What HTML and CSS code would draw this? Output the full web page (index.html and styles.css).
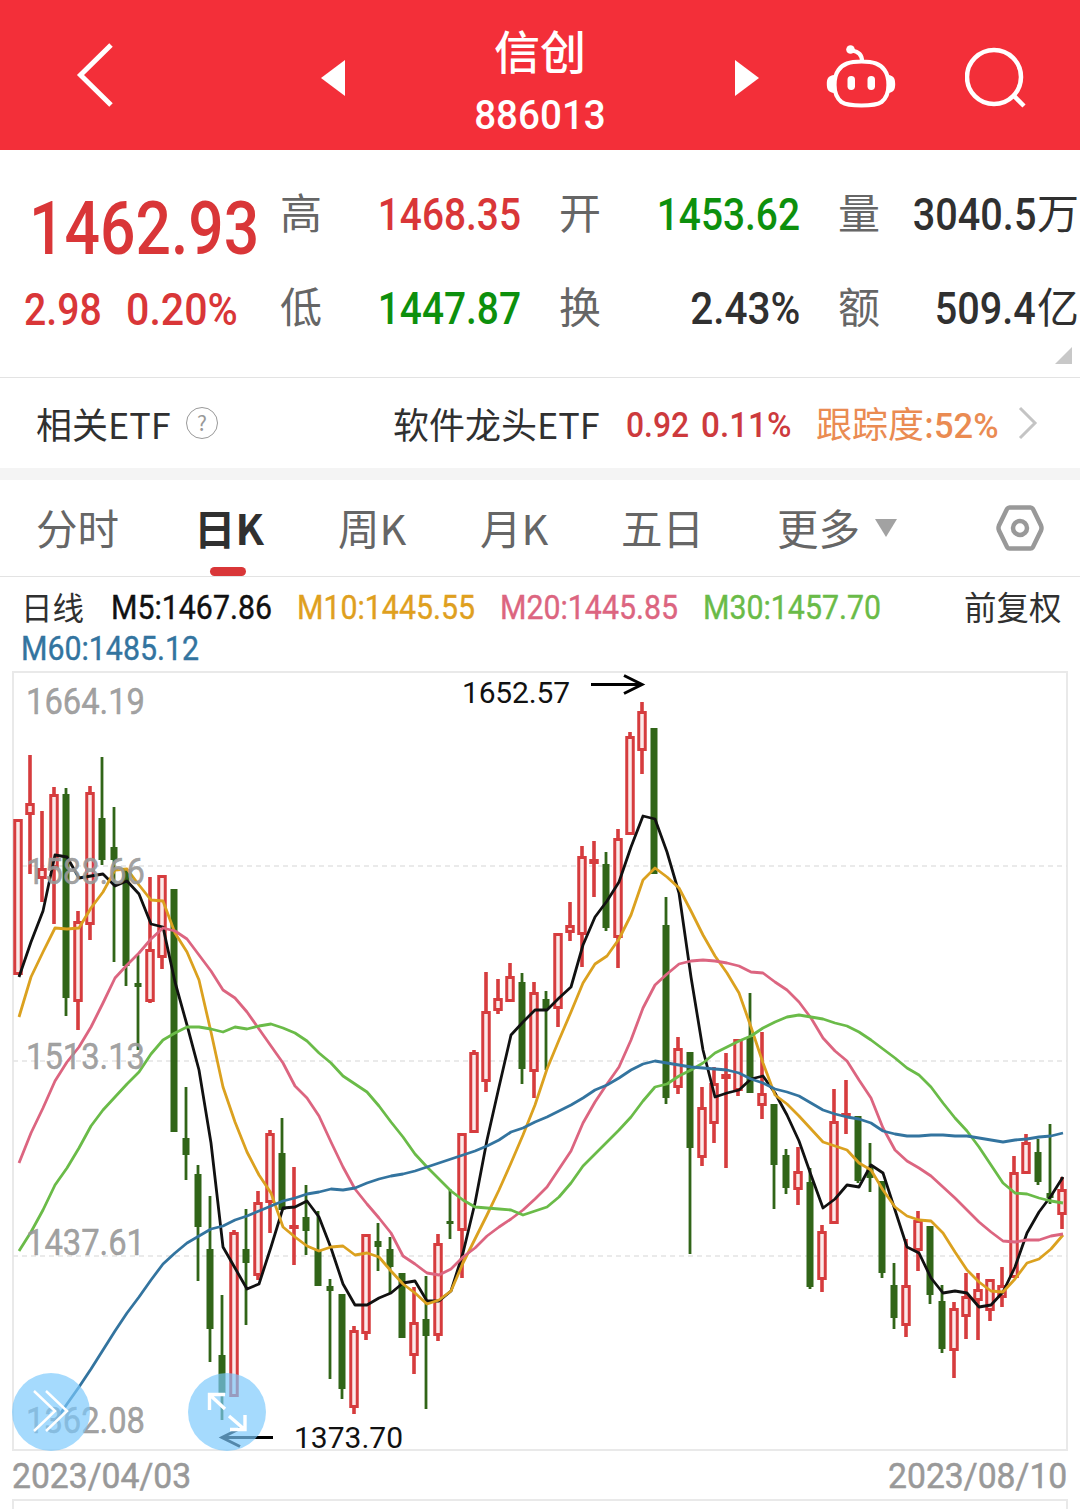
FILE: index.html
```html
<!DOCTYPE html>
<html lang="zh-CN">
<head>
<meta charset="utf-8">
<title>信创 886013</title>
<link rel="stylesheet" href="styles.css">
</head>
<body>
<header class="topbar">
  <svg class="back" viewBox="0 0 40 66"><path d="M36 3 5.500 33 36 63"/></svg>
  <svg class="tri prev" viewBox="0 0 24 36"><path d="M24 0V36L0 18Z"/></svg>
  <div class="title"><h1>信创</h1><span class="num code">886013</span></div>
  <svg class="tri next" viewBox="0 0 24 36"><path d="M0 0V36L24 18Z"/></svg>
  <svg class="robot" viewBox="0 0 70 66">
    <path class="line" d="M35.500 17.500C48 17.500 54 20 58.500 26C61.500 30 62.500 35 62.500 41C62.500 48 60.500 54 55.500 58C50.500 61.300 44 61.500 35.500 61.500C27 61.500 20.500 61.300 15.500 58C10.500 54 8.500 48 8.500 41C8.500 35 9.500 30 12.500 26C17 20 23 17.500 35.500 17.500ZM36 17C36 10 32 7.500 26 6.500"/>
    <circle cx="24.500" cy="5.500" r="4.300"/>
    <rect x="21.500" y="32" width="7.500" height="14" rx="3.700"/><rect x="41.500" y="32" width="7.500" height="14" rx="3.700"/>
    <path d="M8.500 31C2 31.500 .8 35 .8 40S2 48.500 8.500 49ZM62 31C68 31.500 69.200 35 69.200 40S68 48.500 62 49Z"/>
  </svg>
  <svg class="search" viewBox="0 0 64 64"><circle cx="29" cy="30" r="27"/><path d="M48 48 59 59"/></svg>
</header>

<section class="quote">
  <div class="main">
    <div class="price"><span class="num">1462.93</span></div>
    <div class="change"><span class="num">2.98</span><span class="num pct">0.20%</span></div>
  </div>
  <dl class="stats">
    <div><dt>高</dt><dd class="up"><span class="num">1468.35</span></dd></div>
    <div><dt>开</dt><dd class="down"><span class="num">1453.62</span></dd></div>
    <div><dt>量</dt><dd><span class="num wide">3040.5</span><span class="unit">万</span></dd></div>
    <div><dt>低</dt><dd class="down"><span class="num">1447.87</span></dd></div>
    <div><dt>换</dt><dd><span class="num pct">2.43%</span></dd></div>
    <div><dt>额</dt><dd><span class="num wide">509.4</span><span class="unit">亿</span></dd></div>
  </dl>
  <i class="corner"></i>
</section>

<section class="etf">
  <span class="etf-label">相关ETF</span>
  <span class="help">?</span>
  <span class="etf-name">软件龙头ETF</span>
  <span class="num etf-price">0.92</span>
  <span class="num etf-pct">0.11%</span>
  <span class="track">跟踪度:<span class="num">52%</span></span>
  <svg class="chev" viewBox="0 0 20 34"><path d="M2 2 17 17 2 32"/></svg>
</section>

<nav class="tabs">
  <a>分时</a><a class="active">日K</a><a>周K</a><a>月K</a><a>五日</a><a>更多</a>
  <i class="caret"></i>
  <svg class="gear" viewBox="0 0 48 46"><path d="M13.500 2.500H34.500Q36 2.500 37 4L45 20.500Q46 23 45 25.500L37 42Q36 43.500 34.500 43.500H13.500Q12 43.500 11 42L3 25.500Q2 23 3 20.500L11 4Q12 2.500 13.500 2.500Z"/><circle cx="24" cy="23" r="7"/></svg>
</nav>

<section class="legend">
  <span class="period">日线</span>
  <span class="num m5">M5:1467.86</span>
  <span class="num m10">M10:1445.55</span>
  <span class="num m20">M20:1445.85</span>
  <span class="num m30">M30:1457.70</span>
  <span class="adjust">前复权</span>
  <span class="num m60">M60:1485.12</span>
</section>

<section class="chart">
  <svg id="kline" viewBox="0 665 1080 790"></svg>
  <button class="float expand"><svg viewBox="0 0 78 78"><path d="M22 18 43 38 22 58M34 18 55 38 34 58"/></svg></button>
  <button class="float full"><svg viewBox="0 0 78 78"><path class="bold" d="M37 36 22 22M21.500 37V21.500H37M41 43 56 56M42 56.500H57V42"/></svg></button>
</section>
<div class="dates"><span class="num">2023/04/03</span><span class="num">2023/08/10</span></div>
<section class="volume"></section>
<script src="chart.js"></script>
</body>
</html>
```
FILE: styles.css
```css
* { box-sizing: border-box; }
body {
  margin: 0;
  width: 1080px;
  height: 1509px;
  overflow: hidden;
  background: #fff;
  color: #303030;
  font-family: "Noto Sans CJK SC", sans-serif;
}
svg { display: block; fill: none; flex: none; }
.num {
  display: inline-block;
  font-family: Roboto, sans-serif;
  font-weight: 500;
  white-space: nowrap;
  transform-origin: 0 50%;
}

.topbar { display: flex; height: 150px; background: #f32f39; color: #fff; }
.back { width: 40px; height: 66px; margin: 42px 0 0 75px; stroke: #fff; stroke-width: 5; }
.tri { width: 24px; height: 36px; margin-top: 60px; fill: #fff; }
.prev { margin-left: 206px; }
.title { width: 390px; text-align: center; padding-top: 19px; }
.title h1 { margin: 0; font-size: 46px; font-weight: 500; line-height: 60px; }
.code { display: block; font-size: 41.500px; line-height: 50px; margin-top: 11px; transform: scaleX(.93); transform-origin: 50% 50%; }
.robot { width: 70px; height: 66px; margin: 44px 0 0 67px; fill: #fff; }
.robot .line { fill: none; stroke: #fff; stroke-width: 4.200; }
.search { width: 64px; height: 64px; margin: 47px 0 0 69px; stroke: #fff; stroke-width: 4.500; }

.quote { position: relative; display: flex; height: 228px; border-bottom: 1px solid #e3e3e3; }
.main { width: 280px; color: #d93638; }
.price { height: 120px; padding: 28px 0 0 29px; font-size: 74.500px; line-height: 88px; }
.price .num { line-height: 88px; transform: scaleX(.838); }
.change { display: flex; padding-left: 24px; font-size: 44px; line-height: 80px; }
.change .num { width: 102px; transform: scaleX(.89); }
.change .pct { transform: scaleX(.935); }
.stats { display: grid; grid-template-columns: repeat(3, 241px); column-gap: 38px; grid-auto-rows: 94px; margin: 15px 0 0; font-size: 42px; line-height: 92px; }
.stats div { display: flex; justify-content: space-between; height: 94px; }
.stats dt { color: #666; }
.stats dd { margin: 0; white-space: nowrap; display: flex; justify-content: flex-end; }
.stats .num { font-size: 45px; line-height: 99px; transform: scaleX(.863); transform-origin: 100% 50%; }
.stats .pct { transform: scaleX(.9); }
.stats .wide { margin-right: 1px; transform: scaleX(.88); }
.up { color: #d93638; }
.down { color: #0d900d; }
.corner { position: absolute; right: 8px; bottom: 13px; width: 17px; height: 17px; background: #c8c8c8; clip-path: polygon(100% 0, 100% 100%, 0 100%); }

.etf { display: flex; align-items: center; height: 102px; border-bottom: 12px solid #f4f4f4; padding-left: 36px; font-size: 36px; line-height: 90px; white-space: nowrap; }
.etf > * { flex: none; }
.etf-label { width: 150px; }
.help { width: 32px; height: 32px; border: 1.500px solid #999; border-radius: 50%; font-size: 21px; line-height: 28px; text-align: center; color: #999; }
.etf-name { width: 233px; margin-left: 175px; }
.etf .num { font-size: 35px; }
.etf-price, .etf-pct { padding-top: 5px; color: #cd3a3d; }
.etf-price { width: 75px; transform: scaleX(.91); }
.etf-pct { width: 115px; transform: scaleX(.95); }
.track { width: 202px; padding-top: 2px; color: #ea8b52; }
.track .num { transform: scaleX(.985); }
.chev { width: 20px; height: 34px; stroke: #c4c4c4; stroke-width: 3; }

.tabs { display: flex; align-items: center; height: 97px; border-bottom: 1px solid #e3e3e3; padding-left: 36px; font-size: 41.500px; line-height: 94px; color: #666; }
.tabs a { position: relative; width: 142px; height: 96px; white-space: nowrap; }
.tabs a:first-child { width: 158px; }
.tabs a:nth-child(2) { width: 144px; }
.tabs a:nth-child(4) { width: 141px; }
.tabs a:nth-child(5) { width: 156px; }
.tabs a:nth-child(6) { width: 98px; }
.tabs .active { font-weight: 700; color: #303030; }
.active::after { content: ""; position: absolute; left: 16px; bottom: 0; width: 36px; height: 9px; border-radius: 5px; background: #d93638; }
.caret { width: 22px; height: 18px; background: #a2a2a2; clip-path: polygon(0 0, 100% 0, 50% 100%); }
.gear { width: 48px; height: 46px; margin-left: 99px; stroke: #999; stroke-width: 4.500; }

.legend { display: grid; grid-template-columns: 90px 186px 203px 203px 261px 100px; grid-template-rows: 41px 41px; height: 88px; padding: 10px 0 0 21px; font-size: 32.500px; line-height: 38px; white-space: nowrap; }
.legend .num { font-size: 33px; line-height: 41px; font-weight: 400; -webkit-text-stroke: .4px currentColor; transform: scaleX(.918); }
.period { font-size: 31.500px; }
.m5 { color: #111; }
.m10 { color: #dfa01e; }
.m20 { color: #dc6580; }
.m30 { color: #6abb48; }
.m60 { color: #33749f; }

.chart { position: relative; height: 790px; }
#kline { width: 1080px; height: 790px; }
.frame { stroke: #e9e9e9; stroke-width: 2; }
.grid { stroke: #e4e4e4; stroke-width: 1.500; stroke-dasharray: 5 4; }
.rise { stroke: #d63c3e; fill: #fbe9e9; stroke-width: 3; }
.rise-wick { stroke: #d63c3e; stroke-width: 3.600; }
.fall { fill: #316518; }
.fall-wick { stroke: #316518; stroke-width: 2.800; }
.ma { stroke-width: 2.800; stroke-linejoin: round; }
.ma.m5 { stroke: #111; }
.ma.m10 { stroke: #dba11f; }
.ma.m20 { stroke: #dc6580; }
.ma.m30 { stroke: #6abb48; }
.ma.m60 { stroke: #33749f; }
.axis { fill: #999; fill-opacity: .92; stroke: #999; stroke-opacity: .92; stroke-width: .5; font: 400 36px Roboto, sans-serif; }
.mark { fill: #111; font: 400 30px Roboto, sans-serif; }
.arrow { stroke: #000; stroke-width: 3; }
.float { position: absolute; top: 708px; width: 78px; height: 78px; padding: 0; border: 0; border-radius: 50%; background: rgba(122, 200, 252, .68); }
.float svg { stroke: #fff; stroke-width: 2.500; }
.float .bold { stroke-width: 3.400; }
.expand { left: 12px; }
.full { left: 188px; }

.dates { display: flex; justify-content: space-between; height: 44px; padding: 0 13px 0 12px; font-size: 35px; line-height: 43px; color: #999; }
.dates .num { font-weight: 400; -webkit-text-stroke: .5px currentColor; transform: scaleX(.962); }
.dates .num:last-child { transform-origin: 100% 50%; }
.volume { height: 30px; margin: 0 12px; border: 2px solid #e9e9e9; }
```
FILE: chart.js
```js
// Each candle: direction, high, body top, body bottom, low (chart y units).
const candles = `r819,819,975,975 r755,803,815,874 r811,868,879,902 r787,794,868,924 g788,794,998,1016 r911,921,1002,1030 r786,792,925,940 g757,818,860,865
g807,847,860,962 g869,869,966,986 g955,983,987,1050 r877,949,1002,1003 r875,875,958,969 g889,889,1132,1132 g1087,1138,1155,1180 g1165,1174,1227,1281
g1196,1249,1329,1362 g1295,1355,1393,1420 r1230,1232,1397,1397 g1209,1249,1263,1325 r1191,1202,1276,1280 r1130,1133,1203,1233 g1118,1153,1210,1210 r1167,1225,1229,1265
g1185,1217,1231,1255 g1211,1250,1286,1286 g1279,1286,1291,1379 g1294,1294,1389,1399 r1326,1330,1408,1414 r1234,1234,1334,1340 g1223,1241,1247,1271 g1237,1249,1267,1293
g1273,1273,1338,1338 r1287,1322,1356,1374 g1276,1319,1336,1409 r1234,1243,1336,1341 g1189,1221,1224,1239 r1133,1133,1231,1278 r1050,1052,1133,1133 r972,1011,1082,1092
r979,998,1011,1014 r963,976,1002,1002 g973,982,1069,1084 r982,992,1072,1098 g991,999,1009,1070 r933,933,1009,1027 r902,925,933,941 r846,856,935,967
r841,859,864,897 g852,864,928,931 r829,838,938,968 r732,736,835,835 r702,711,751,774 g728,728,874,874 g897,925,1098,1104 r1037,1048,1088,1094
g1052,1052,1148,1254 r1087,1107,1158,1166 r1067,1083,1124,1143 r1053,1074,1079,1168 r1039,1039,1091,1096 g993,1037,1093,1093 r1032,1093,1106,1119 g1104,1104,1165,1209
g1149,1155,1188,1194 r1147,1171,1190,1205 g1168,1182,1287,1289 r1225,1231,1280,1292 r1089,1121,1224,1224 r1080,1113,1117,1134 g1116,1116,1181,1183 g1143,1167,1178,1192
g1181,1181,1273,1278 g1263,1285,1318,1329 r1239,1285,1326,1337 r1211,1220,1251,1271 g1226,1226,1295,1304 g1285,1301,1349,1353 r1302,1308,1351,1378 r1273,1296,1317,1339
r1273,1289,1301,1340 r1279,1279,1311,1321 r1267,1285,1298,1307 r1156,1172,1278,1278 r1134,1142,1174,1174 g1139,1152,1182,1185 g1124,1193,1198,1204 r1177,1189,1215,1229`.split(/\s+/);

const averages = {
  m5: [0, [977, 942, 911, 855, 857, 878, 876, 874, 886, 881, 894, 924, 927, 982, 1025, 1070, 1143, 1247, 1268, 1289, 1284, 1247, 1208, 1207, 1201, 1217, 1248, 1284, 1305, 1305, 1298, 1293, 1283, 1281, 1301, 1301, 1291, 1253, 1203, 1140, 1087, 1035, 1022, 1010, 1010, 998, 987, 945, 917, 901, 882, 847, 816, 819, 852, 893, 977, 1050, 1097, 1093, 1090, 1079, 1076, 1093, 1115, 1141, 1175, 1208, 1199, 1185, 1187, 1165, 1173, 1210, 1247, 1253, 1278, 1293, 1291, 1293, 1307, 1305, 1292, 1267, 1233, 1212, 1196, 1177]],
  m10: [0, [1017, 977, 952, 928, 929, 928, 908, 892, 870, 869, 885, 900, 901, 933, 952, 980, 1032, 1087, 1122, 1152, 1175, 1193, 1227, 1237, 1246, 1251, 1247, 1246, 1255, 1253, 1257, 1271, 1284, 1293, 1304, 1300, 1291, 1263, 1239, 1215, 1190, 1163, 1135, 1105, 1069, 1040, 1012, 983, 964, 956, 939, 915, 880, 868, 877, 888, 911, 935, 956, 973, 993, 1027, 1063, 1095, 1104, 1116, 1129, 1142, 1146, 1150, 1163, 1170, 1190, 1207, 1216, 1220, 1221, 1233, 1252, 1270, 1282, 1291, 1292, 1279, 1263, 1259, 1249, 1235]],
  m20: [0, [1163, 1133, 1108, 1081, 1062, 1047, 1027, 1003, 978, 965, 953, 939, 928, 931, 939, 955, 971, 990, 998, 1012, 1029, 1046, 1063, 1086, 1098, 1116, 1142, 1167, 1189, 1204, 1218, 1233, 1256, 1264, 1273, 1275, 1269, 1257, 1248, 1236, 1227, 1219, 1210, 1199, 1187, 1169, 1151, 1123, 1102, 1084, 1067, 1040, 1008, 985, 974, 964, 961, 960, 961, 963, 966, 972, 973, 982, 990, 1002, 1018, 1038, 1051, 1061, 1080, 1098, 1128, 1150, 1161, 1168, 1176, 1187, 1198, 1210, 1222, 1232, 1241, 1242, 1240, 1240, 1236, 1234]],
  m30: [0, [1251, 1232, 1210, 1185, 1168, 1148, 1126, 1110, 1097, 1084, 1072, 1054, 1040, 1033, 1027, 1027, 1029, 1032, 1027, 1029, 1026, 1024, 1028, 1033, 1041, 1053, 1063, 1076, 1084, 1092, 1106, 1122, 1137, 1154, 1167, 1179, 1191, 1200, 1207, 1208, 1209, 1210, 1215, 1211, 1207, 1197, 1183, 1166, 1154, 1142, 1130, 1117, 1101, 1087, 1084, 1076, 1070, 1063, 1053, 1047, 1041, 1036, 1028, 1022, 1017, 1015, 1017, 1019, 1023, 1026, 1032, 1040, 1049, 1058, 1068, 1075, 1087, 1103, 1118, 1131, 1147, 1165, 1183, 1193, 1194, 1198, 1201, 1203]],
  m60: [3, [1422, 1404, 1387, 1369, 1350, 1331, 1313, 1297, 1280, 1264, 1253, 1243, 1236, 1229, 1226, 1220, 1216, 1211, 1206, 1201, 1198, 1194, 1192, 1189, 1190, 1188, 1183, 1179, 1176, 1174, 1171, 1167, 1163, 1159, 1155, 1151, 1146, 1140, 1132, 1128, 1122, 1117, 1111, 1105, 1098, 1090, 1085, 1078, 1070, 1064, 1061, 1063, 1065, 1067, 1068, 1069, 1070, 1073, 1079, 1083, 1089, 1092, 1096, 1103, 1110, 1114, 1117, 1119, 1123, 1131, 1134, 1136, 1136, 1135, 1135, 1136, 1136, 1138, 1140, 1142, 1140, 1139, 1137, 1136, 1133]]
};

const out = ['<rect class="frame" x="13" y="672" width="1054" height="778"/>'];
for (const y of [866, 1061, 1256]) out.push(`<path class="grid" d="M13 ${y}H1067"/>`);

candles.forEach((c, i) => {
  const x = 18 + i * 12;
  const [high, top, bottom, low] = c.slice(1).split(',').map(Number);
  if (c[0] === 'r') {
    out.push(`<path class="rise-wick" d="M${x} ${high}V${top + 1}M${x} ${bottom - 1}V${low}"/>`);
    const h = Math.max(bottom - top - 3, 1);
    out.push(`<rect class="rise" x="${x - 3.25}" y="${top + 1.5}" width="6.500" height="${h}"/>`);
  } else {
    out.push(`<path class="fall-wick" d="M${x} ${high}V${low}"/>`);
    out.push(`<rect class="fall" x="${x - 3.5}" y="${top}" width="7" height="${bottom - top}"/>`);
  }
});

for (const [name, [start, ys]] of Object.entries(averages)) {
  const pts = ys.map((y, i) => `${19 + (i + start) * 12},${y}`).join(' ');
  out.push(`<polyline class="ma ${name}" points="${pts}"/>`);
}

const labels = [['1664.19', 714], ['1588.66', 883.5], ['1513.13', 1069], ['1437.61', 1255], ['1362.08', 1433]];
for (const [text, y] of labels) {
  out.push(`<text class="axis" x="26" y="${y}" textLength="119" lengthAdjust="spacingAndGlyphs">${text}</text>`);
}
out.push('<text class="mark" x="462" y="703" textLength="108">1652.57</text>');
out.push('<text class="mark" x="294" y="1448" textLength="109">1373.70</text>');
out.push('<path class="arrow" d="M591 684.500H642M624 675.500 642 684.500 624 693.500"/>');
out.push('<path class="arrow" d="M273 1437.500H222M240 1428.500 222 1437.500 240 1446.500"/>');
document.getElementById('kline').innerHTML = out.join('');
```
